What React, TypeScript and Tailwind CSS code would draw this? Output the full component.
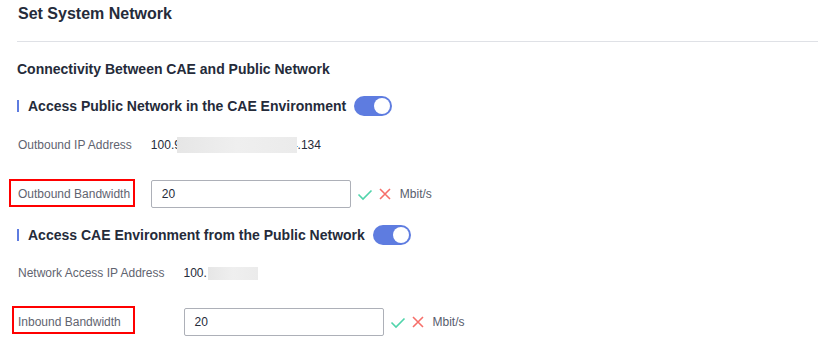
import React, { FC } from "react"

const Toggle: FC = () => (
	<div className="ml-2 flex h-[20px] w-[38px] items-center justify-end rounded-full bg-[#5e7ce0] pr-[2px]">
		<div className="h-[16px] w-[16px] rounded-full bg-white" />
	</div>
)

const SubTitle: FC<{ text: string }> = ({ text }) => (
	<div className="flex h-[20px] items-center">
		<span className="mr-[9px] h-[12px] w-[2px] bg-[#5e7ce0]" />
		<span className="text-[14px] font-bold leading-[20px] text-[#252b3a]">{text}</span>
		<Toggle />
	</div>
)

const Blur: FC<{ w: string; h: string }> = ({ w, h }) => (
	<span className={`relative z-10 inline-block bg-gradient-to-r from-[#e6e6e6] via-[#efefef] to-[#ebebeb] align-middle ${w} ${h}`} />
)

const Actions: FC = () => (
	<div className="ml-[6px] flex items-center">
		<svg width="16" height="12" viewBox="0 0 16 12" className="mt-px">
			<path d="M1.5 5.5 L6 10 L14.5 1.5" fill="none" stroke="#50d4ab" strokeWidth="1.6" />
		</svg>
		<svg width="12" height="12" viewBox="0 0 12 12" className="ml-[6px]">
			<path d="M1 1 L11 11 M11 1 L1 11" fill="none" stroke="#f66f6a" strokeWidth="1.6" />
		</svg>
		<span className="ml-[9px] text-[12px] text-[#575d6c]">Mbit/s</span>
	</div>
)

const Input: FC<{ value: string }> = ({ value }) => (
	<div className="flex h-[28px] w-[200px] items-center rounded-[2px] border border-[#adb0b8] bg-white pl-[10px] text-[12px] text-[#252b3a]">
		{value}
	</div>
)

export default function App() {
	return (
		<div className="h-[346px] w-[818px] overflow-hidden bg-white pl-[17px] font-['Liberation_Sans',Arial,sans-serif] text-[#252b3a]">
			<div className="h-[28px] pl-px text-[16px] font-bold leading-[28px]">Set System Network</div>
			<div className="mt-[13px] h-px bg-[#dfe1e6]" />

			<div className="mt-[17px] text-[14px] font-bold leading-[20px]">
				Connectivity Between CAE and Public Network
			</div>

			<div className="mt-[17px]">
				<SubTitle text="Access Public Network in the CAE Environment" />
			</div>

			<div className="mt-[15px] grid grid-cols-[auto_1fr] items-center gap-x-[19px] gap-y-[21px] pl-px text-[12px]">
				<div className="flex h-[28px] items-center text-[#5f6470]">Outbound IP Address</div>
				<div className="flex items-center text-[#252b3a]">
					<span>100.9</span>
					<Blur w="w-[120px] -ml-[4px]" h="h-[16px]" />
					<span className="-ml-[6px]">4.134</span>
				</div>

				<div className="relative flex h-[28px] items-center text-[#5f6470]">
					<span className="absolute -top-[1px] -left-[9px] h-[28px] w-[126px] border-2 border-[#ff0000]" />
					Outbound Bandwidth
				</div>
				<div className="flex items-center">
					<Input value="20" />
					<Actions />
				</div>
			</div>

			<div className="mt-[17px]">
				<SubTitle text="Access CAE Environment from the Public Network" />
			</div>

			<div className="mt-[14px] grid grid-cols-[auto_1fr] items-center gap-x-[19px] gap-y-[21px] pl-px text-[12px]">
				<div className="flex h-[28px] items-center text-[#5f6470]">Network Access IP Address</div>
				<div className="flex items-center text-[#252b3a]">
					<span>100.</span>
					<Blur w="w-[50px] ml-px" h="h-[13px]" />
				</div>

				<div className="relative flex h-[28px] items-center text-[#5f6470]">
					<span className="absolute -top-[2px] -left-[6px] h-[28px] w-[123px] border-2 border-[#ff0000]" />
					Inbound Bandwidth
				</div>
				<div className="flex items-center">
					<Input value="20" />
					<Actions />
				</div>
			</div>
		</div>
	)
}
